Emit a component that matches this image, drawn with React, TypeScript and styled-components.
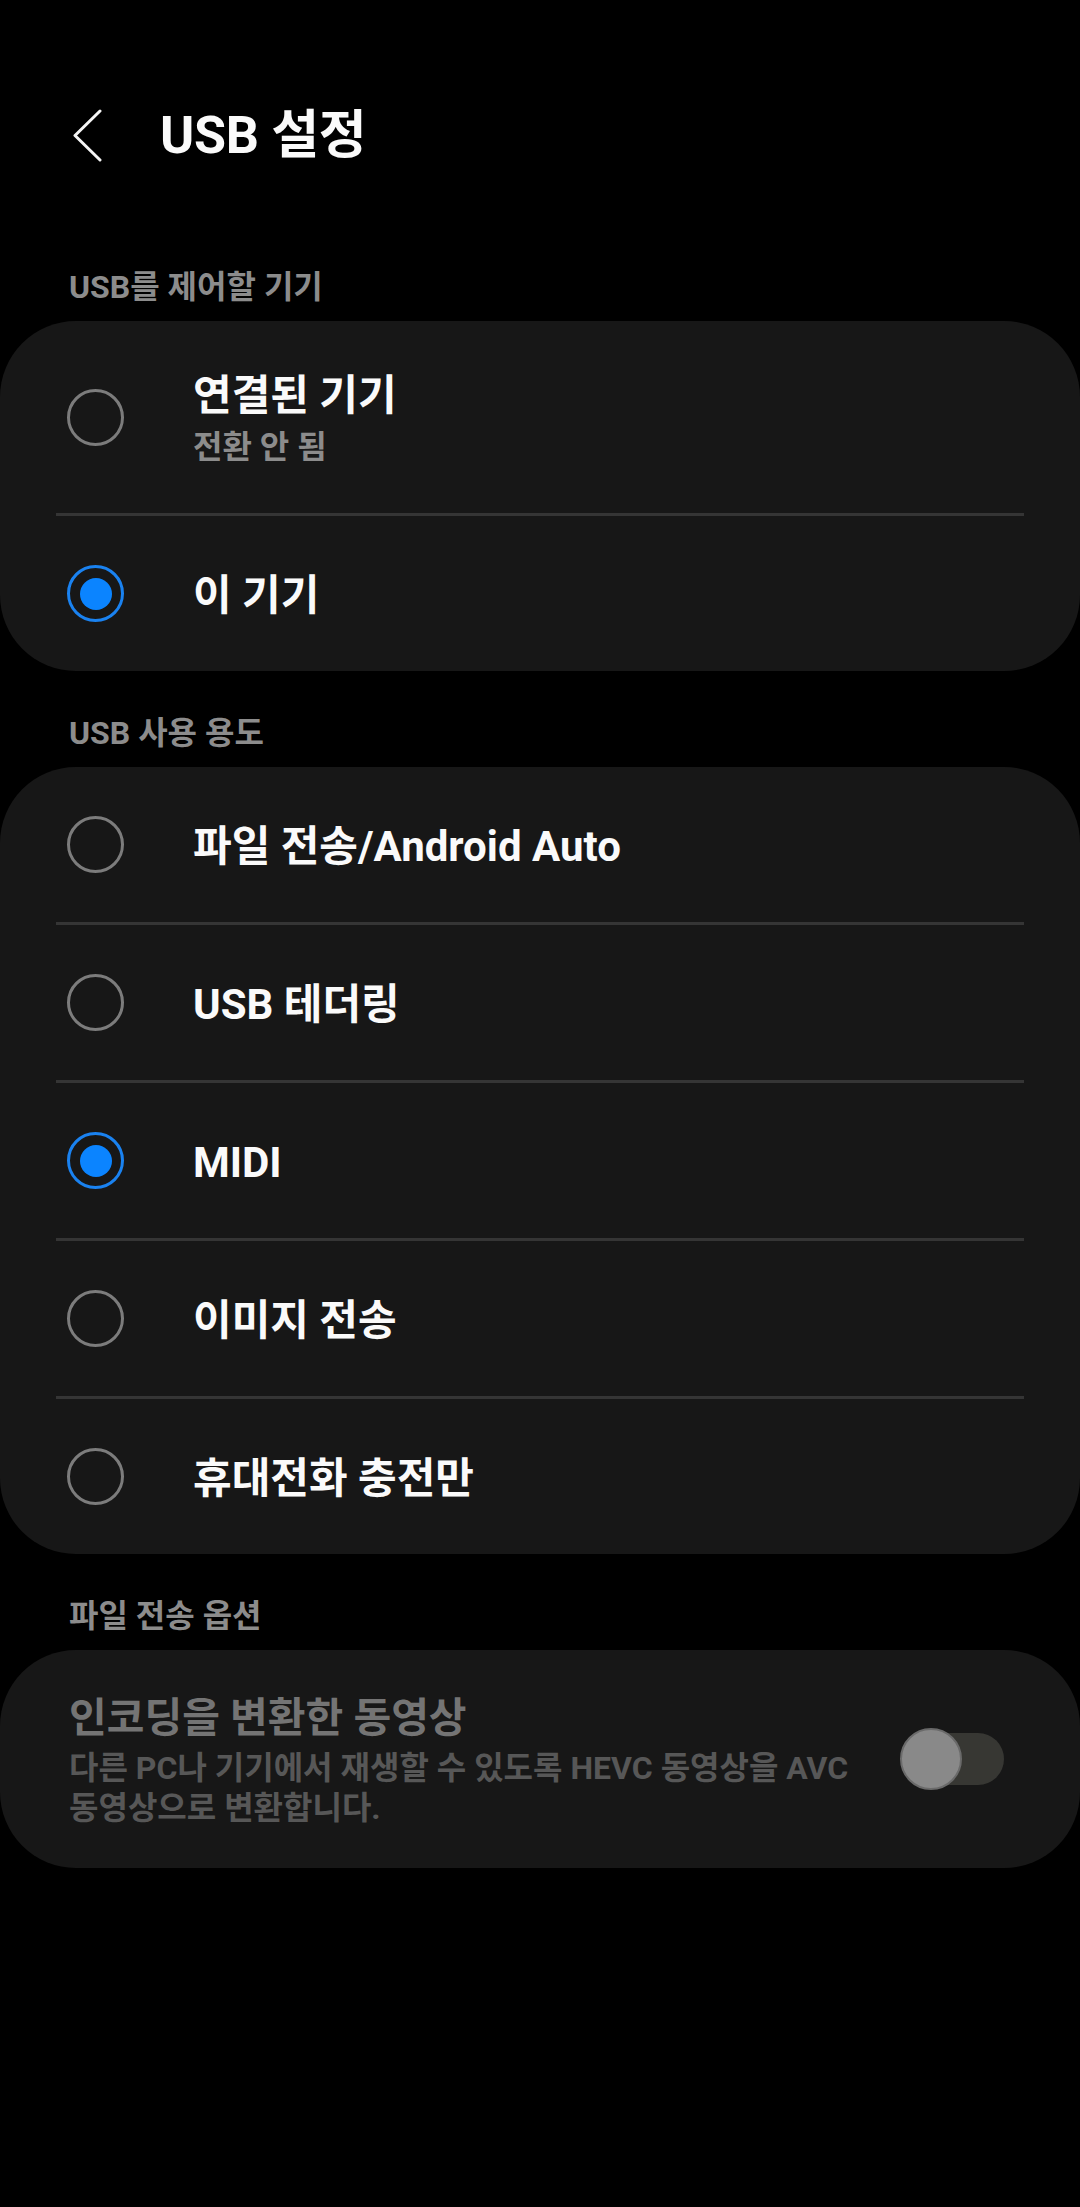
import React from "react";
import styled, { createGlobalStyle } from "styled-components";

const GlobalStyle = createGlobalStyle`
  html, body {
    margin: 0;
    padding: 0;
    background: #000;
  }
  body {
    font-family: Roboto, "Noto Sans CJK KR", "Noto Sans", sans-serif;
    -webkit-font-smoothing: antialiased;
    word-break: keep-all;
  }
  * { box-sizing: border-box; }
`;

const Page = styled.div`
  width: 1080px;
  min-height: 2207px;
  background: #000;
  display: flex;
  flex-direction: column;
`;

const TopBar = styled.header`
  display: flex;
  align-items: center;
  height: 100px;
  margin-top: 86px;
  margin-bottom: 39px;
  padding-left: 73px;
`;

const BackButton = styled.button`
  display: flex;
  align-items: center;
  justify-content: center;
  width: 30px;
  height: 54px;
  padding: 0;
  border: none;
  background: transparent;
  cursor: pointer;
`;

const Title = styled.h1`
  margin: 0 0 0 57px;
  font-size: 52px;
  font-weight: 700;
  line-height: 60px;
  color: #fafafa;
  letter-spacing: -0.3px;
`;

const Section = styled.section`
  display: flex;
  flex-direction: column;
  margin-top: 41px;
`;

const SectionHeader = styled.h2`
  margin: 0 0 13px;
  padding-left: 69px;
  font-size: 32px;
  font-weight: 700;
  line-height: 42px;
  color: #8c8c8c;
`;

const Card = styled.div`
  background: #171717;
  border-radius: 76px;
  display: flex;
  flex-direction: column;
  overflow: hidden;
`;

const Row = styled.div<{ $tall?: boolean }>`
  display: flex;
  align-items: center;
  min-height: ${(p) => (p.$tall ? 192 : 155)}px;
  padding: 0 56px 0 67px;
`;

const Radio = styled.span<{ $checked?: boolean }>`
  flex: none;
  width: 57px;
  height: 57px;
  border-radius: 50%;
  border: 3px solid ${(p) => (p.$checked ? "#1a82f0" : "#7c7c7c")};
  display: flex;
  align-items: center;
  justify-content: center;
`;

const RadioDot = styled.span`
  width: 32px;
  height: 32px;
  border-radius: 50%;
  background: #0b84ff;
`;

const RowText = styled.div`
  display: flex;
  flex-direction: column;
  margin-left: 69px;
  padding-top: 4px;
`;

const RowTitle = styled.div`
  font-size: 42px;
  font-weight: 700;
  line-height: 52px;
  color: #fafafa;
`;

const RowSub = styled.div`
  margin-top: 3px;
  font-size: 32px;
  font-weight: 700;
  line-height: 44px;
  color: #8c8c8c;
`;

const Divider = styled.div`
  height: 3px;
  margin: 0 56px;
  background: #353535;
`;

const OptionRow = styled.div`
  display: flex;
  align-items: center;
  gap: 24px;
  min-height: 218px;
  padding: 0 76px 0 69px;
`;

const OptionText = styled.div`
  flex: 1;
  display: flex;
  flex-direction: column;
  padding-top: 2px;
`;

const OptionTitle = styled.div`
  font-size: 41px;
  font-weight: 700;
  line-height: 52px;
  color: #747474;
`;

const OptionDesc = styled.div`
  margin-top: 4px;
  font-size: 32px;
  font-weight: 700;
  line-height: 40px;
  color: #575757;
`;

const Toggle = styled.div`
  position: relative;
  flex: none;
  width: 104px;
  height: 62px;
  display: flex;
  align-items: center;
`;

const Track = styled.span`
  margin-left: 12px;
  width: 92px;
  height: 52px;
  border-radius: 26px;
  background: #373733;
`;

const Thumb = styled.span`
  position: absolute;
  left: 0;
  top: 0;
  width: 62px;
  height: 62px;
  border-radius: 50%;
  background: #898989;
  border: 2px solid #6a6a6a;
`;

type Opt = { label: string; sub?: string; checked?: boolean };

const controlOptions: Opt[] = [
  { label: "연결된 기기", sub: "전환 안 됨" },
  { label: "이 기기", checked: true },
];

const usageOptions: Opt[] = [
  { label: "파일 전송/Android Auto" },
  { label: "USB 테더링" },
  { label: "MIDI", checked: true },
  { label: "이미지 전송" },
  { label: "휴대전화 충전만" },
];

function RadioList({ items }: { items: Opt[] }) {
  return (
    <Card>
      {items.map((it, i) => (
        <React.Fragment key={it.label}>
          {i > 0 && <Divider />}
          <Row $tall={!!it.sub}>
            <Radio $checked={it.checked}>{it.checked && <RadioDot />}</Radio>
            <RowText>
              <RowTitle>{it.label}</RowTitle>
              {it.sub && <RowSub>{it.sub}</RowSub>}
            </RowText>
          </Row>
        </React.Fragment>
      ))}
    </Card>
  );
}

export default function App() {
  return (
    <>
      <GlobalStyle />
      <Page>
        <TopBar>
          <BackButton aria-label="뒤로">
            <svg width="30" height="54" viewBox="0 0 30 54" fill="none">
              <polyline
                points="27,2 2,26.5 27,51"
                stroke="#f5f5f5"
                strokeWidth="3"
                strokeLinecap="round"
                strokeLinejoin="round"
              />
            </svg>
          </BackButton>
          <Title>USB 설정</Title>
        </TopBar>

        <Section>
          <SectionHeader>USB를 제어할 기기</SectionHeader>
          <RadioList items={controlOptions} />
        </Section>

        <Section>
          <SectionHeader>USB 사용 용도</SectionHeader>
          <RadioList items={usageOptions} />
        </Section>

        <Section>
          <SectionHeader>파일 전송 옵션</SectionHeader>
          <Card>
            <OptionRow>
              <OptionText>
                <OptionTitle>인코딩을 변환한 동영상</OptionTitle>
                <OptionDesc>
                  다른 PC나 기기에서 재생할 수 있도록 HEVC 동영상을 AVC 동영상으로 변환합니다.
                </OptionDesc>
              </OptionText>
              <Toggle>
                <Track />
                <Thumb />
              </Toggle>
            </OptionRow>
          </Card>
        </Section>
      </Page>
    </>
  );
}
